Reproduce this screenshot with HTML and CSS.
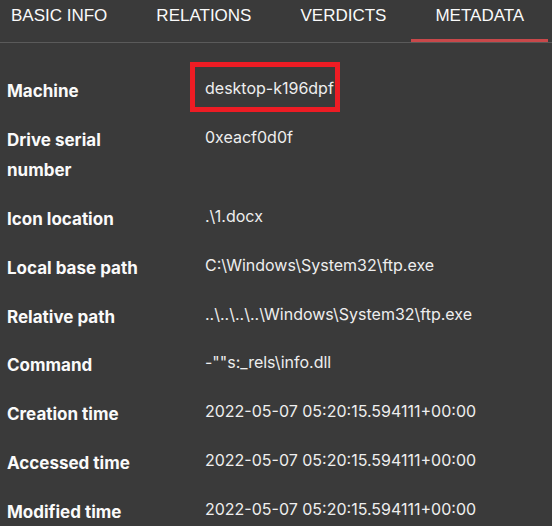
FILE: index.html
```html
<!DOCTYPE html>
<html lang="en">
    <head>
        <meta charset="UTF-8">
        <meta name="viewport" content="width=device-width, initial-scale=1.0">
        <title>File metadata</title>
        <link rel="stylesheet" href="styles.css">
    </head>
    <body>
        <nav class="tabs">
            <div class="tab">BASIC INFO</div>
            <div class="tab">RELATIONS</div>
            <div class="tab">VERDICTS</div>
            <div class="tab active">METADATA</div>
        </nav>

        <div class="meta-list">
            <div class="label">Machine</div>
            <div class="value"><span class="marked">desktop-k196dpf</span></div>

            <div class="label">Drive serial number</div>
            <div class="value">0xeacf0d0f</div>

            <div class="label">Icon location</div>
            <div class="value">.\1.docx</div>

            <div class="label">Local base path</div>
            <div class="value">C:\Windows\System32\ftp.exe</div>

            <div class="label">Relative path</div>
            <div class="value">..\..\..\..\Windows\System32\ftp.exe</div>

            <div class="label">Command</div>
            <div class="value">-""s:_rels\info.dll</div>

            <div class="label">Creation time</div>
            <div class="value">2022-05-07 05:20:15.594111+00:00</div>

            <div class="label">Accessed time</div>
            <div class="value">2022-05-07 05:20:15.594111+00:00</div>

            <div class="label">Modified time</div>
            <div class="value">2022-05-07 05:20:15.594111+00:00</div>
        </div>
    </body>
</html>
```

FILE: styles.css
```css
:root {
    --bg: rgb(58, 58, 58);
    --line: rgb(90, 90, 90);
    --accent: rgb(200, 72, 74);
    --mark: rgb(237, 28, 36);
    --text: rgb(250, 250, 250);
    --muted: rgb(238, 238, 238);
}

body {
    margin: 0;
    background-color: var(--bg);
    color: var(--text);
    font-family: Inter, "Noto Sans", sans-serif;
    overflow: hidden;
}

.tabs {
    display: flex;
    gap: 1px;
    margin-left: -13px;
    border-bottom: 1px solid var(--line);
}

.tab {
    height: 35px;
    padding: 4px 24px 0;
    border-bottom: 3px solid transparent;
    font-family: "Liberation Sans", Arial, sans-serif;
    font-size: 17px;
    line-height: 24px;
    color: var(--text);
}

.tab.active {
    border-bottom-color: var(--accent);
}

.meta-list {
    display: grid;
    grid-template-columns: 150px 1fr;
    column-gap: 48px;
    padding: 24px 0 0 7px;
}

.label,
.value {
    padding: 9.4px 0;
}

.label {
    font-weight: 700;
    font-size: 17px;
    line-height: 30px;
}

.value {
    font-size: 16px;
    line-height: 25px;
    color: var(--muted);
}

/* red frame drawn round the highlighted value */
.marked {
    position: relative;
    display: inline-block;
}

.marked::after {
    content: "";
    position: absolute;
    left: -15px;
    right: -6px;
    top: -14px;
    bottom: -11px;
    border: 5px solid var(--mark);
}
```
